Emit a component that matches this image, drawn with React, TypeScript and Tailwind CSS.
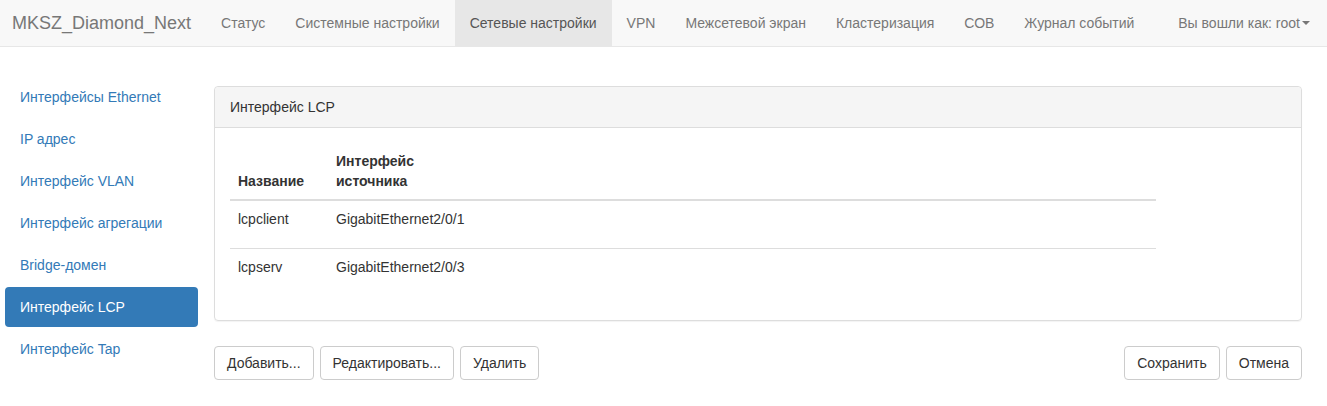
const NAV = ['Статус', 'Системные настройки', 'Сетевые настройки', 'VPN', 'Межсетевой экран', 'Кластеризация', 'СОВ', 'Журнал событий'];

const SIDE = ['Интерфейсы Ethernet', 'IP адрес', 'Интерфейс VLAN', 'Интерфейс агрегации', 'Bridge-домен', 'Интерфейс LCP', 'Интерфейс Tap'];

const ROWS = [
  { name: 'lcpclient', src: 'GigabitEthernet2/0/1' },
  { name: 'lcpserv', src: 'GigabitEthernet2/0/3' },
];

function Btn({ children }: { children: string }) {
  return (
    <button className="h-[34px] px-[12px] border border-[#ccc] rounded-[4px] bg-white text-[14px] text-[#333] leading-[20px]">
      {children}
    </button>
  );
}

export default function App() {
  return (
    <div className="min-h-screen bg-white text-[14px] leading-[20px] text-[#333]" style={{ fontFamily: '"Liberation Sans", Arial, sans-serif' }}>
      {/* Navbar */}
      <div className="h-[47px] bg-[#f8f8f8] border-b border-[#e7e7e7] flex items-stretch">
        <div className="pl-[12px] pr-[15px] flex items-center text-[18px] text-[#777]">MKSZ_Diamond_Next</div>
        {NAV.map((n) => (
          <div
            key={n}
            className={`px-[15px] flex items-center ${n === 'Сетевые настройки' ? 'bg-[#e7e7e7] text-[#555]' : 'text-[#777]'}`}
          >
            {n}
          </div>
        ))}
        <div className="ml-auto pr-[17px] flex items-center text-[#777]">
          Вы вошли как: root
          <span className="ml-[2px] inline-block w-0 h-0 border-l-[4px] border-r-[4px] border-t-[4px] border-l-transparent border-r-transparent border-t-[#777]" />
        </div>
      </div>

      <div className="flex pl-[5px] pr-[25px]">
        {/* Sidebar pills */}
        <div className="w-[193px] shrink-0 pt-[30px] flex flex-col gap-[2px]">
          {SIDE.map((s) => (
            <div
              key={s}
              className={`h-[40px] px-[15px] flex items-center rounded-[4px] ${s === 'Интерфейс LCP' ? 'bg-[#337ab7] text-white' : 'text-[#337ab7]'}`}
            >
              {s}
            </div>
          ))}
        </div>

        {/* Main */}
        <div className="flex-1 ml-[16px] pt-[39px]">
          <div className="border border-[#ddd] rounded-[4px] shadow-[0_1px_1px_rgba(0,0,0,0.05)]">
            <div className="px-[15px] py-[10px] bg-[#f5f5f5] border-b border-[#ddd] rounded-t-[4px]">Интерфейс LCP</div>
            <div className="px-[15px] pt-[15px] pb-[24px]">
              <table className="w-[926px] border-collapse">
                <thead>
                  <tr className="border-b-2 border-[#ddd]">
                    <th className="w-[98px] p-[8px] text-left align-bottom font-bold">Название</th>
                    <th className="w-[152px] p-[8px] text-left align-bottom font-bold">Интерфейс<br />источника</th>
                    <th className="p-[8px]" />
                  </tr>
                </thead>
                <tbody>
                  {ROWS.map((r, i) => (
                    <tr key={r.name} className={i === 0 ? 'border-b border-[#ddd]' : ''}>
                      <td className="p-[8px] pb-[19px] align-top">{r.name}</td>
                      <td className="p-[8px] pb-[19px] align-top whitespace-nowrap">{r.src}</td>
                      <td className="p-[8px]" />
                    </tr>
                  ))}
                </tbody>
              </table>
            </div>
          </div>

          <div className="mt-[25px] flex">
            <div className="flex gap-[6px]">
              <Btn>Добавить...</Btn>
              <Btn>Редактировать...</Btn>
              <Btn>Удалить</Btn>
            </div>
            <div className="ml-auto flex gap-[6px]">
              <Btn>Сохранить</Btn>
              <Btn>Отмена</Btn>
            </div>
          </div>
        </div>
      </div>
    </div>
  );
}
